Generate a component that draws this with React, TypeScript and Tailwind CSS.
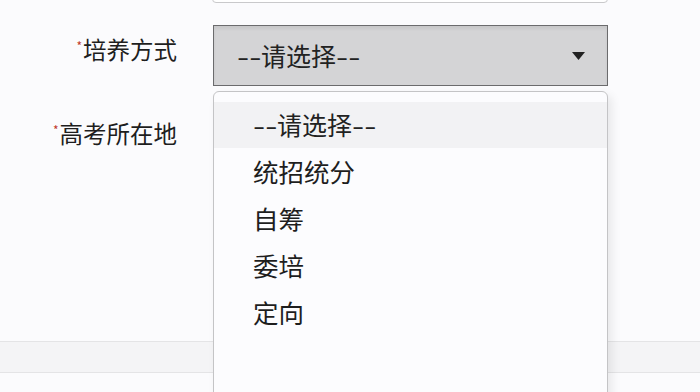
import React from "react";

const options = ["统招统分", "自筹", "委培", "定向"];

function Label({ text }: { text: string }) {
  return (
    <div className="w-[177px] shrink-0 text-right text-[23.5px] leading-none text-[#1e1e1e]">
      <span className="relative -top-[8px] mr-[1px] text-[12px] text-[#c0392b]">*</span>
      {text}
    </div>
  );
}

function Dashes() {
  return (
    <span className="inline-block w-[24px]">
      <span className="inline-block origin-left scale-x-[1.4]">--</span>
    </span>
  );
}

function Placeholder() {
  return (
    <span className="text-[25px] text-[#222]">
      <Dashes />
      请选择
      <Dashes />
    </span>
  );
}

export default function App() {
  return (
    <div
      className="relative h-[392px] w-[700px] overflow-hidden bg-[#fbfbfd]"
      style={{ fontFamily: '"Noto Sans CJK SC", "Noto Sans", sans-serif' }}
    >
      {/* input from the row above, cut off at the top */}
      <div className="-mt-[37px] ml-[212px] h-[40px] w-[396px] rounded-[4px] border border-[#c9c9cb] bg-white" />

      <div className="mt-[22px] flex items-start">
        <div className="pt-[13px]">
          <Label text="培养方式" />
        </div>
        <div className="ml-[36px] flex h-[61px] w-[395px] items-center justify-between border border-[#6b6b6d] bg-[#d4d4d6] pl-[23px] pr-[22px] shadow-[inset_0_3px_3px_rgba(0,0,0,0.06)]">
          <Placeholder />
          <svg width="13" height="8" viewBox="0 0 13 8">
            <path d="M0 0 L13 0 L6.5 8 Z" fill="#222" />
          </svg>
        </div>
      </div>

      <div className="mt-[36px] flex">
        <Label text="高考所在地" />
      </div>

      {/* bottom band */}
      <div className="mt-[195px] h-[32px] border-y border-[#e4e4e6] bg-[#f4f4f6]" />

      {/* open dropdown */}
      <div className="absolute left-[213px] top-[91px] h-[320px] w-[395px] rounded-t-[6px] border border-[#c4c4c6] bg-[#fcfcfe] pt-[10px] shadow-[4px_4px_10px_rgba(0,0,0,0.08)]">
        <div className="flex h-[46px] items-center bg-[#f2f2f4] pl-[39px]">
          <Placeholder />
        </div>
        {options.map((o) => (
          <div key={o} className="flex h-[47px] items-center pl-[39px] text-[25.5px] text-[#1e1e1e]">
            {o}
          </div>
        ))}
      </div>
    </div>
  );
}
